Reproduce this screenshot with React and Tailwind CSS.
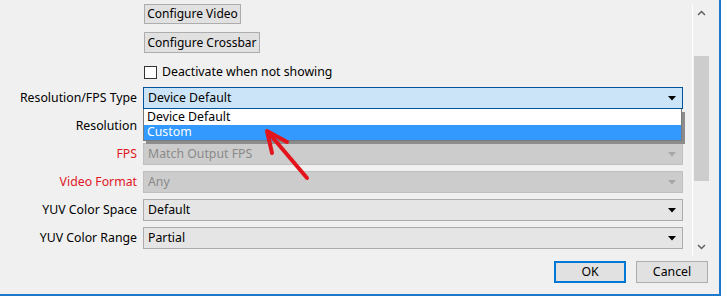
import React from "react";

const font = { fontFamily: '"Noto Sans", "Open Sans", sans-serif' };

function Arrow({ color = "#000" }) {
  return (
    <svg width="8" height="5" viewBox="0 0 8 5" className="shrink-0">
      <path d="M0 0 L8 0 L4 4.5 Z" fill={color} />
    </svg>
  );
}

function Combo({ text, variant = "normal" }) {
  const styles = {
    normal: "bg-[#e5e5e5] border-[#acacac] text-black",
    focus: "bg-[#cce4f7] border-[#005499] text-black",
    disabled: "bg-[#cccccc] border-[#bfbfbf] text-[#8a8a8a]",
  };
  return (
    <div
      className={`h-[22px] w-[540px] border flex items-center justify-between pl-[4px] pr-[6px] text-[12.3px] leading-none ${styles[variant]}`}
    >
      <span>{text}</span>
      <Arrow color={variant === "disabled" ? "#a6a6a6" : "#000"} />
    </div>
  );
}

function Row({ label, red, children }) {
  return (
    <div className="flex items-center h-[22px]">
      <div
        className={`w-[137px] text-right text-[12.3px] leading-none ${red ? "text-[#e0171f]" : "text-black"}`}
      >
        {label}
      </div>
      <div className="ml-[6px]">{children}</div>
    </div>
  );
}

function Chevron({ up }) {
  return (
    <svg width="9" height="6" viewBox="0 0 9 6">
      <path
        d={up ? "M1 5 L4.5 1.5 L8 5" : "M1 1 L4.5 4.5 L8 1"}
        fill="none"
        stroke="#606060"
        strokeWidth="1.5"
      />
    </svg>
  );
}

export default function App() {
  return (
    <div
      style={font}
      className="relative w-[721px] h-[296px] bg-[#f0f0f0] border-r-2 border-b-2 border-[#1e78cc] overflow-hidden flex flex-col"
    >
      <div className="flex h-[261px]">
        <div className="w-[692px] flex flex-col">
          <div className="flex flex-col pl-[144px]">
            <button className="mt-[4px] h-[20px] w-[97px] bg-[#e1e1e1] border border-[#adadad] text-[12px] leading-none text-black">
              Configure Video
            </button>
            <button className="mt-[8px] h-[21px] w-[116px] bg-[#e1e1e1] border border-[#adadad] text-[12px] leading-none text-black">
              Configure Crossbar
            </button>
            <div className="mt-[13px] h-[13px] flex items-center">
              <div className="w-[13px] h-[13px] bg-white border border-[#333333]" />
              <span className="ml-[5px] text-[12.3px] leading-none text-black">
                Deactivate when not showing
              </span>
            </div>
          </div>
          <div className="mt-[8px] flex flex-col gap-[6px]">
            <Row label="Resolution/FPS Type">
              <Combo text="Device Default" variant="focus" />
            </Row>
            <Row label="Resolution">
              <Combo text="" variant="normal" />
            </Row>
            <Row label="FPS" red>
              <Combo text="Match Output FPS" variant="disabled" />
            </Row>
            <Row label="Video Format" red>
              <Combo text="Any" variant="disabled" />
            </Row>
            <Row label="YUV Color Space">
              <Combo text="Default" />
            </Row>
            <Row label="YUV Color Range">
              <Combo text="Partial" />
            </Row>
          </div>
        </div>
        <div className="mt-[4px] h-[252px] w-[17px] border-l border-white flex flex-col items-center">
          <div className="h-[17px] flex items-center justify-center">
            <Chevron up />
          </div>
          <div className="mt-[35px] h-[125px] w-[15px] bg-[#cdcdcd]" />
          <div className="flex-1" />
          <div className="h-[17px] mb-[1px] flex items-center justify-center">
            <Chevron />
          </div>
        </div>
      </div>
      <div className="flex justify-end gap-[10px] pr-[11px]">
        <button className="h-[22px] w-[72px] bg-[#e1e1e1] border-2 border-[#0078d7] text-[12.3px] leading-none text-black">
          OK
        </button>
        <button className="h-[22px] w-[72px] bg-[#e1e1e1] border border-[#adadad] text-[12.3px] leading-none text-black">
          Cancel
        </button>
      </div>

      {/* dropdown list overlay */}
      <div className="absolute left-[143px] top-[109px] w-[539px] bg-white border border-t-0 border-[#7a7a7a] shadow-[3px_3px_0_#8c8c8c] text-[12.3px] leading-none">
        <div className="h-[16px] flex items-center pl-[3px] text-black">Device Default</div>
        <div className="h-[15px] flex items-center pl-[3px] bg-[#3399ff] text-white">Custom</div>
      </div>

      {/* red annotation arrow */}
      <svg className="absolute left-0 top-0 pointer-events-none" width="721" height="296">
        <path d="M268 132 L307 178" stroke="#e3141b" strokeWidth="4" strokeLinecap="round" fill="none" />
        <path d="M272 153 L267 131 L287 142" stroke="#e3141b" strokeWidth="4" strokeLinecap="round" strokeLinejoin="round" fill="none" />
      </svg>
    </div>
  );
}
